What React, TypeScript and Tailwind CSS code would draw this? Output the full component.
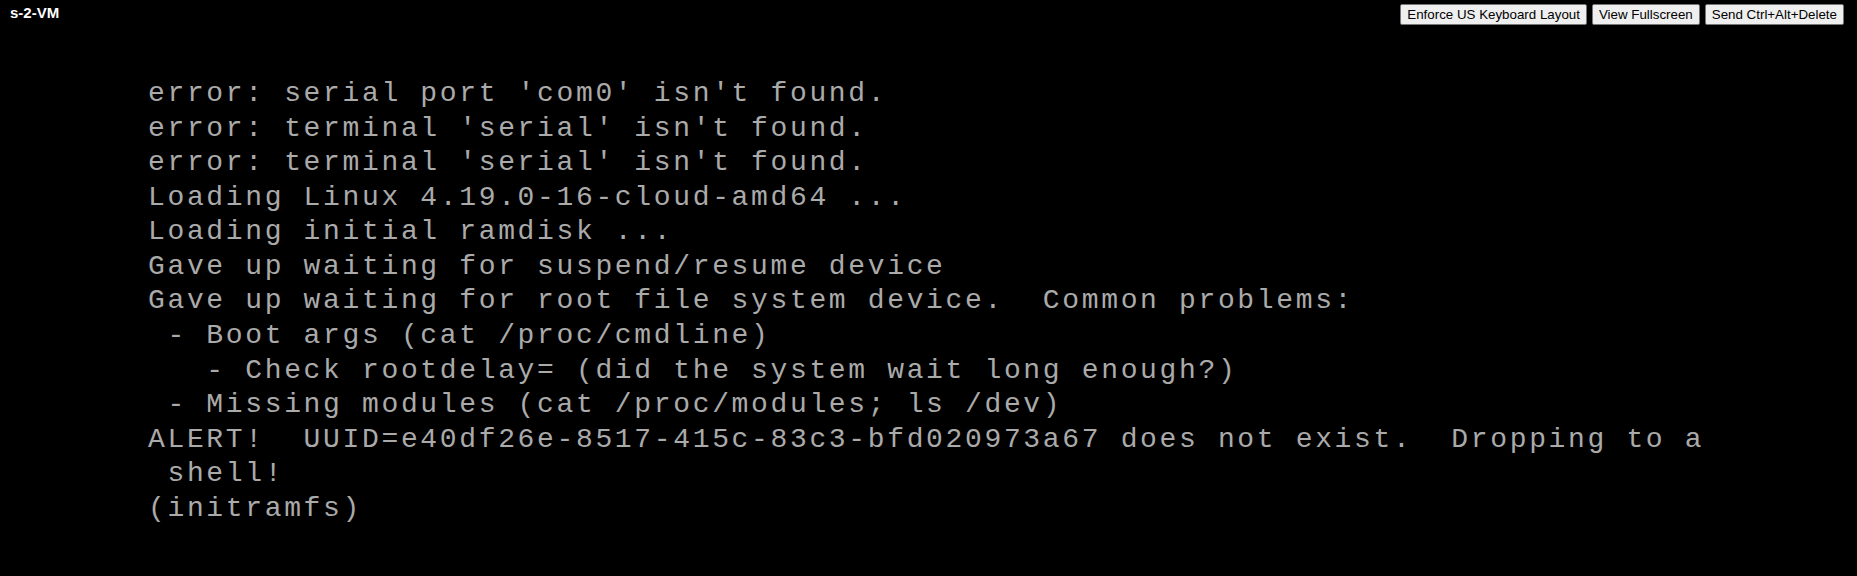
import React from "react";

const lines = [
  "error: serial port 'com0' isn't found.",
  "error: terminal 'serial' isn't found.",
  "error: terminal 'serial' isn't found.",
  "Loading Linux 4.19.0-16-cloud-amd64 ...",
  "Loading initial ramdisk ...",
  "Gave up waiting for suspend/resume device",
  "Gave up waiting for root file system device.  Common problems:",
  " - Boot args (cat /proc/cmdline)",
  "   - Check rootdelay= (did the system wait long enough?)",
  " - Missing modules (cat /proc/modules; ls /dev)",
  "ALERT!  UUID=e40df26e-8517-415c-83c3-bfd020973a67 does not exist.  Dropping to a",
  " shell!",
  "(initramfs)",
];

export default function App() {
  return (
    <div className="h-[576px] w-full overflow-hidden bg-black">
      <div className="flex h-[30px] items-start justify-between">
        <div
          className="pl-[10px] pt-[4px] text-[15px] leading-[17px] font-bold text-white"
          style={{ fontFamily: '"Liberation Sans", Arial, sans-serif' }}
        >
          s-2-VM
        </div>
        <div
          className="flex gap-[5px] pr-[13px] pt-[4px]"
          style={{ fontFamily: '"Liberation Sans", Arial, sans-serif' }}
        >
          {["Enforce US Keyboard Layout", "View Fullscreen", "Send Ctrl+Alt+Delete"].map((t) => (
            <button
              key={t}
              className="h-[21px] rounded-[2px] border border-[#767676] bg-[#efefef] px-[6px] text-[13.3333px] leading-[15px] text-black"
            >
              {t}
            </button>
          ))}
        </div>
      </div>
      <div
        className="pl-[148px] pt-[47px] text-[28px] leading-[34.58px] tracking-[2.65px] whitespace-pre text-[#aaaaaa]"
        style={{ fontFamily: '"Liberation Mono", "DejaVu Sans Mono", monospace' }}
      >
        {lines.map((l, i) => (
          <div key={i}>{l}</div>
        ))}
      </div>
    </div>
  );
}
